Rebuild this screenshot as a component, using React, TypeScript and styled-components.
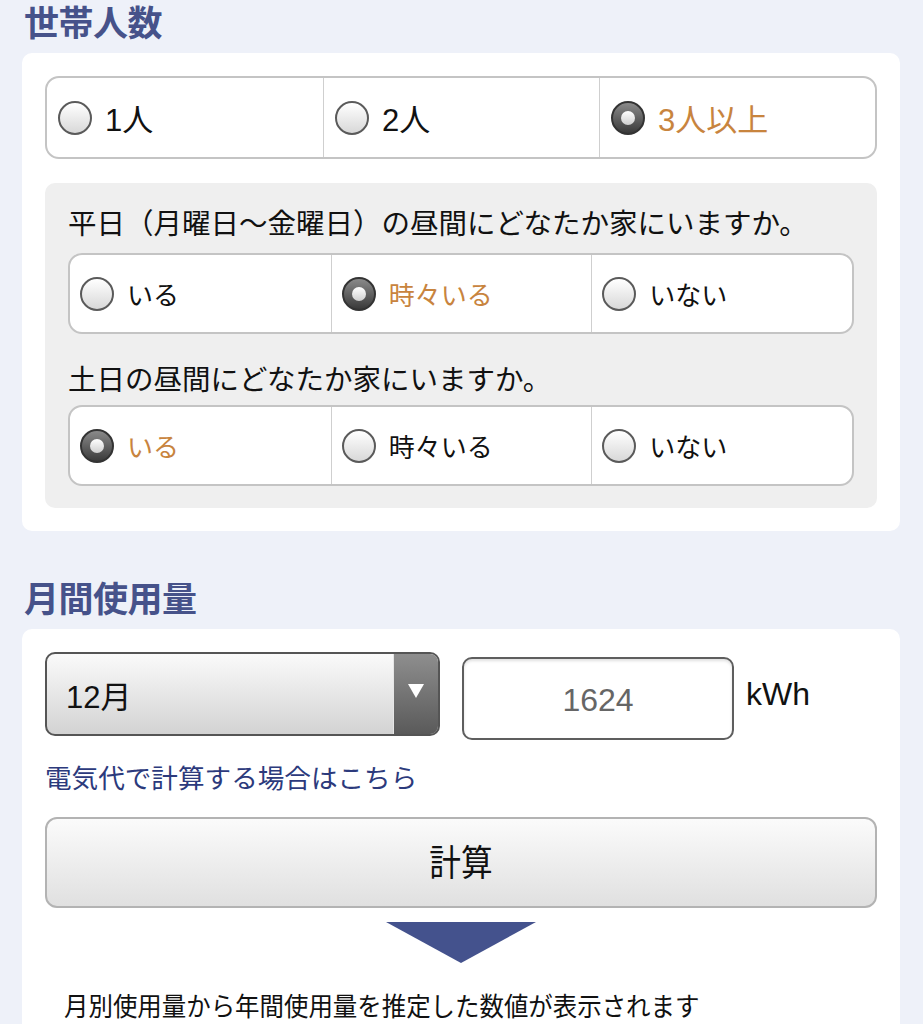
import React from "react";
import styled, { createGlobalStyle, css } from "styled-components";

const Global = createGlobalStyle`
  html, body { margin: 0; padding: 0; background: #eef1f9; }
  body { font-family: "Liberation Sans", "Noto Sans CJK JP", sans-serif; color: #111; }
  * { box-sizing: border-box; }
`;

const Page = styled.div`
  padding: 0 23px 0 22px;
  width: 923px;
`;

const SectionTitle = styled.h2<{ $first?: boolean }>`
  margin: ${(p) => (p.$first ? "0" : "45px")} 0 11px 2px;
  height: 42px;
  line-height: 42px;
  font-size: 35px;
  font-weight: 700;
  color: #46528a;
  font-family: "Noto Sans CJK JP", sans-serif;
  letter-spacing: -0.5px;
`;

const Card = styled.section`
  background: #fff;
  border-radius: 10px;
  padding: 23px 23px 23px;
  display: flex;
  flex-direction: column;
`;

const Segmented = styled.div<{ $size: "lg" | "sm" }>`
  display: grid;
  grid-template-columns: 1fr 1fr 1fr;
  background: #fff;
  border: 2px solid #c4c4c4;
  border-radius: 14px;
  height: ${(p) => (p.$size === "lg" ? "83px" : "81px")};
  overflow: hidden;
`;

const Cell = styled.label<{ $size: "lg" | "sm"; $checked: boolean }>`
  display: flex;
  align-items: center;
  gap: 13px;
  padding-left: ${(p) => (p.$size === "lg" ? "11px" : "10px")};
  font-size: ${(p) => (p.$size === "lg" ? "31px" : "26px")};
  color: ${(p) => (p.$checked ? "#c8843e" : "#111")};
  & + & { border-left: 1px solid #cfcfcf; }
`;

const Radio = styled.span<{ $checked: boolean }>`
  position: relative;
  width: 34px;
  height: 34px;
  border-radius: 50%;
  flex: none;
  ${(p) =>
    p.$checked
      ? css`
          background: linear-gradient(#8a8a8a, #3a3a3a);
          border: 2px solid #333;
          &::after {
            content: "";
            position: absolute;
            left: 50%;
            top: 50%;
            width: 14px;
            height: 14px;
            margin: -7px 0 0 -7px;
            border-radius: 50%;
            background: linear-gradient(#fff, #cfcfcf);
          }
        `
      : css`
          background: linear-gradient(#ffffff, #d8d8d8);
          border: 2px solid #5a5a5a;
        `}
`;

const Panel = styled.div`
  margin-top: 24px;
  background: #efefef;
  border-radius: 10px;
  padding: 20px 23px 22px;
  display: flex;
  flex-direction: column;
`;

const Question = styled.p<{ $second?: boolean }>`
  margin: ${(p) => (p.$second ? "25px 0 8px" : "0 0 12px")};
  font-size: 28.5px;
  line-height: 38px;
  font-family: "Noto Sans CJK JP", sans-serif;
  color: #111;
  white-space: nowrap;
`;

const UsageRow = styled.div`
  display: flex;
  align-items: flex-start;
`;

const Select = styled.div`
  width: 395px;
  height: 84px;
  border: 2px solid #555;
  border-radius: 10px;
  background: linear-gradient(#fafafa, #d3d3d3);
  display: flex;
  overflow: hidden;
`;

const SelectValue = styled.span`
  flex: 1;
  display: flex;
  align-items: center;
  padding-left: 19px;
  font-size: 31px;
  color: #111;
`;

const SelectArrow = styled.span`
  width: 45px;
  background: linear-gradient(#8e8e8e, #5a5a5a);
  border-left: 1px solid #e6e6e6;
  display: flex;
  justify-content: center;
  padding-top: 30px;
  &::before {
    content: "";
    width: 0;
    height: 0;
    border-left: 8px solid transparent;
    border-right: 8px solid transparent;
    border-top: 14px solid #fff;
  }
`;

const Input = styled.div`
  margin: 5px 0 0 22px;
  width: 272px;
  height: 83px;
  border: 2px solid #5e5e5e;
  border-radius: 10px;
  background: #fff;
  box-shadow: inset 0 2px 3px rgba(0, 0, 0, 0.12);
  display: flex;
  align-items: center;
  justify-content: center;
  font-size: 32px;
  color: #666;
  padding-top: 4px;
`;

const Unit = styled.span`
  margin: 24px 0 0 12px;
  font-size: 32px;
  line-height: 36px;
  color: #111;
`;

const Link = styled.a`
  margin-top: 17px;
  font-size: 26.6px;
  line-height: 40px;
  color: #2c3a7c;
  text-decoration: none;
  font-family: "Noto Sans CJK JP", sans-serif;
`;

const CalcButton = styled.button`
  margin-top: 20px;
  height: 91px;
  width: 100%;
  border: 2px solid #b3b3b3;
  border-radius: 12px;
  background: linear-gradient(#fbfbfb, #e0e0e0);
  display: flex;
  align-items: center;
  justify-content: center;
  font-family: "Noto Sans CJK JP", sans-serif;
  font-size: 36px;
  color: #111;
  padding: 0 0 6px;
`;

const Condensed = styled.span<{ $scale: number; $origin?: string }>`
  display: inline-block;
  transform: scaleX(${(p) => p.$scale});
  transform-origin: ${(p) => p.$origin ?? "center"};
  white-space: nowrap;
`;

const Arrow = styled.div`
  align-self: center;
  margin-top: 14px;
  width: 0;
  height: 0;
  border-left: 75px solid transparent;
  border-right: 75px solid transparent;
  border-top: 41px solid #44528d;
`;

const Note = styled.p`
  margin: 26px 0 0 19px;
  font-size: 26px;
  line-height: 32px;
  font-family: "Noto Sans CJK JP", sans-serif;
  color: #111;
`;

type Opt = { label: string; checked?: boolean };

const Seg: React.FC<{ size: "lg" | "sm"; options: Opt[] }> = ({ size, options }) => (
  <Segmented $size={size}>
    {options.map((o) => (
      <Cell key={o.label} $size={size} $checked={!!o.checked}>
        <Radio $checked={!!o.checked} />
        <span>{o.label}</span>
      </Cell>
    ))}
  </Segmented>
);

export default function App() {
  return (
    <>
      <Global />
      <Page>
        <SectionTitle $first>世帯人数</SectionTitle>
        <Card>
          <Seg size="lg" options={[{ label: "1人" }, { label: "2人" }, { label: "3人以上", checked: true }]} />
          <Panel>
            <Question>平日（月曜日〜金曜日）の昼間にどなたか家にいますか。</Question>
            <Seg size="sm" options={[{ label: "いる" }, { label: "時々いる", checked: true }, { label: "いない" }]} />
            <Question $second>土日の昼間にどなたか家にいますか。</Question>
            <Seg size="sm" options={[{ label: "いる", checked: true }, { label: "時々いる" }, { label: "いない" }]} />
          </Panel>
        </Card>

        <SectionTitle>月間使用量</SectionTitle>
        <Card>
          <UsageRow>
            <Select>
              <SelectValue>12月</SelectValue>
              <SelectArrow />
            </Select>
            <Input>1624</Input>
            <Unit>kWh</Unit>
          </UsageRow>
          <Link href="#">電気代で計算する場合はこちら</Link>
          <CalcButton>
            <Condensed $scale={0.88}>計算</Condensed>
          </CalcButton>
          <Arrow />
          <Note>
            <Condensed $scale={0.94} $origin="left">月別使用量から年間使用量を推定した数値が表示されます</Condensed>
          </Note>
        </Card>
      </Page>
    </>
  );
}
